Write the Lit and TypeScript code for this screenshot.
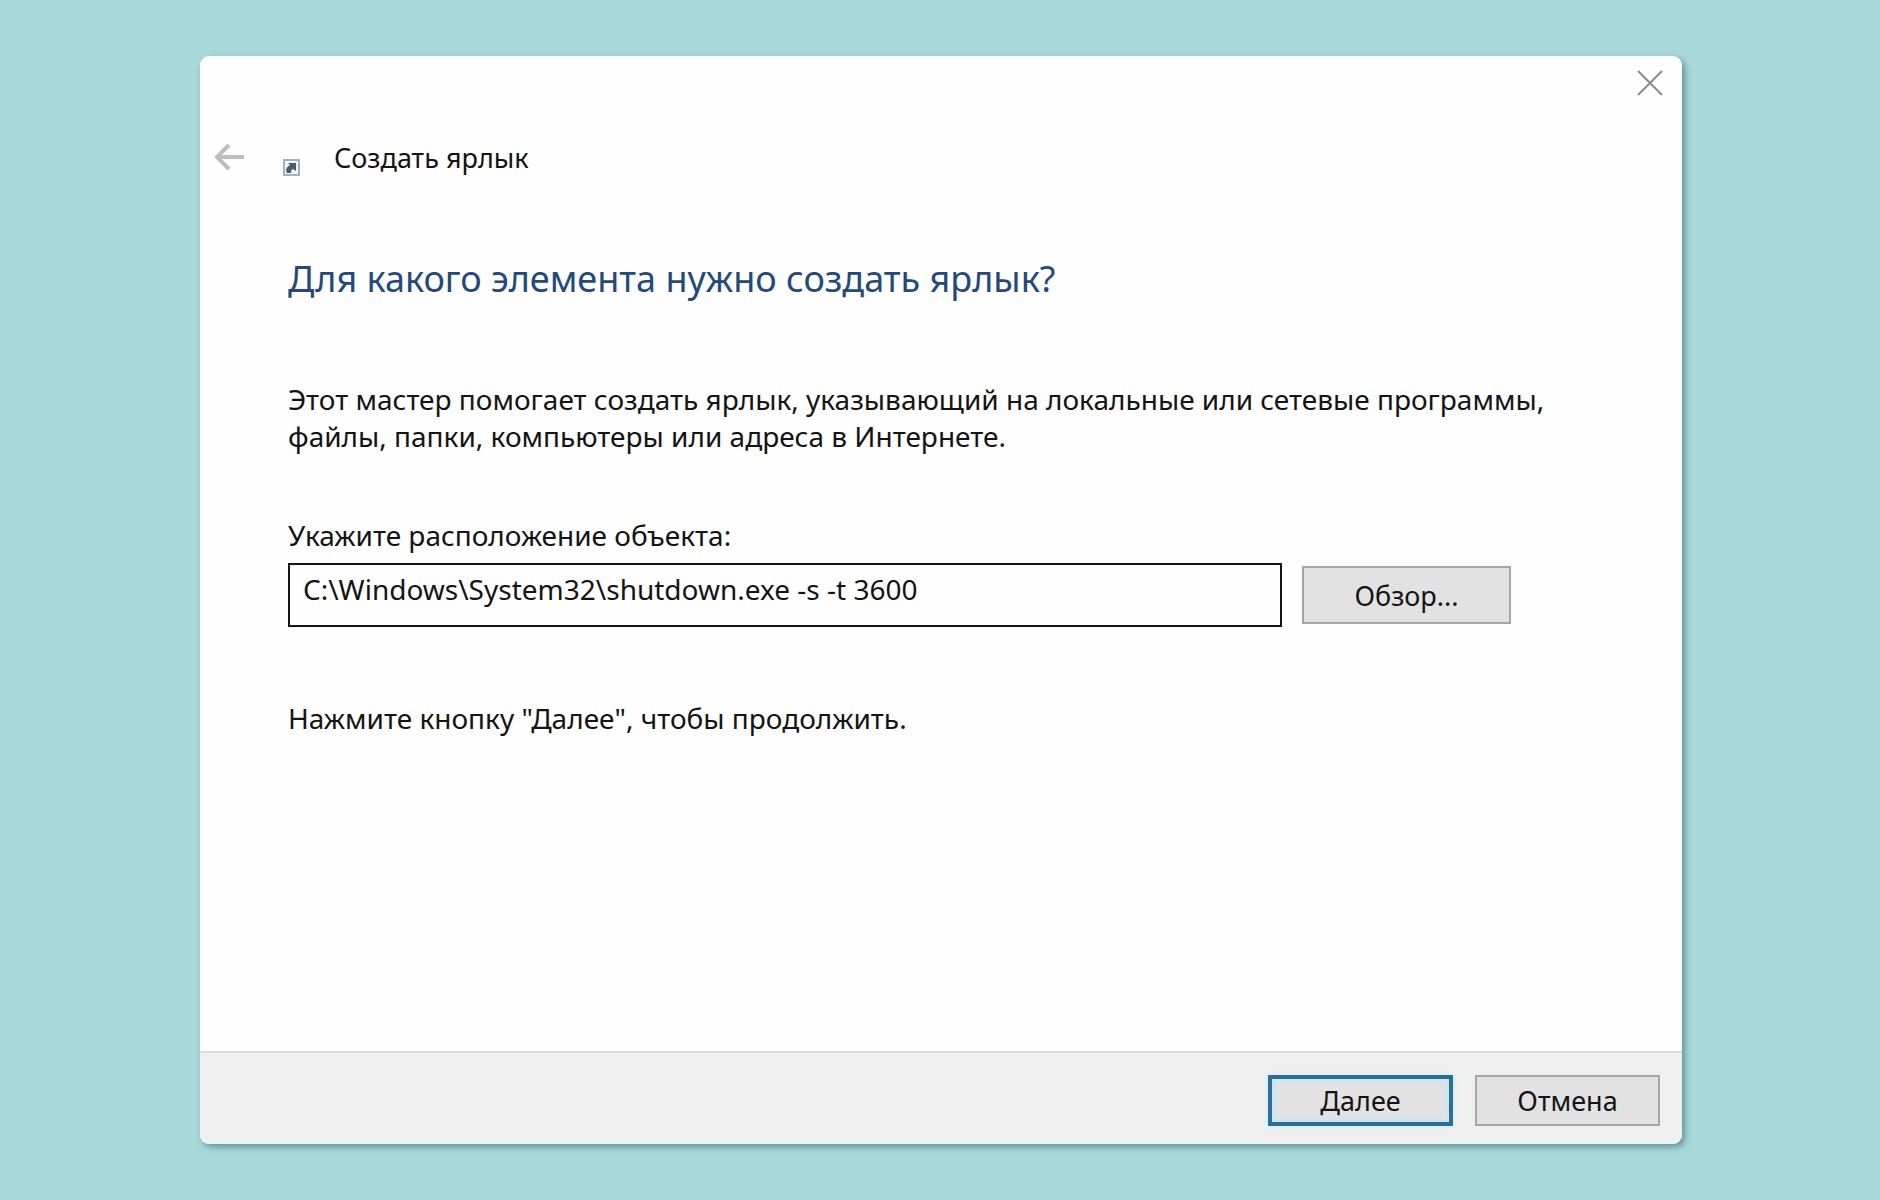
import { LitElement, html, css } from "lit";
import { customElement, state } from "lit/decorators.js";

@customElement("app-root")
export class AppRoot extends LitElement {
  static styles = css`
    :host {
      display: flex;
      box-sizing: border-box;
      min-height: 100vh;
      padding: 56px 198px 56px 200px;
      background: #a7d9db;
      color: #141414;
      font-family: "Noto Sans", "Open Sans", sans-serif;
      font-size: 28px;
      line-height: 37px;
    }
    .window {
      display: flex;
      flex: 1;
      flex-direction: column;
      min-width: 0;
      overflow: hidden;
      border-radius: 9px;
      background: #fefefe;
      box-shadow: 3px 3px 6px rgba(40, 90, 95, 0.55);
    }
    .titlebar {
      display: flex;
      justify-content: flex-end;
      padding: 13px 18px;
    }
    button {
      font: inherit;
      color: inherit;
      margin: 0;
    }
    .icon-button {
      display: flex;
      align-items: center;
      justify-content: center;
      padding: 0;
      border: 0;
      background: none;
    }
    svg {
      display: block;
    }
    .header {
      display: flex;
      align-items: center;
      padding: 29px 14px 0;
    }
    .back {
      margin-right: 38px;
    }
    .shortcut {
      align-self: flex-end;
      margin-right: 34px;
    }
    .title,
    .command {
      font-size: 27px;
    }
    .title {
      margin: 0;
      font-weight: 400;
    }
    .content {
      display: flex;
      flex: 1;
      flex-direction: column;
      padding: 79px 120px 79px 88px;
    }
    .heading {
      margin: 0 0 78px;
      color: #24497a;
      font-size: 36px;
      font-weight: 400;
      line-height: 48px;
    }
    .text {
      margin: 0;
    }
    .location {
      display: flex;
      flex-direction: column;
      gap: 9px;
      margin: 62px 51px 73px 0;
    }
    .field {
      display: flex;
      align-items: center;
      gap: 20px;
    }
    .path {
      box-sizing: border-box;
      flex: 1;
      min-width: 0;
      height: 64px;
      margin: 0;
      padding: 0 13px 12px;
      border: 2px solid #141519;
      border-radius: 0;
      outline: 0;
      background: #fefefe;
      color: inherit;
      font: inherit;
    }
    .command {
      box-sizing: border-box;
      padding: 0;
      border: 2px solid #a6a6a6;
      background: #e2e2e2;
    }
    .browse {
      width: 209px;
      height: 58px;
    }
    .footer {
      display: flex;
      justify-content: flex-end;
      gap: 22px;
      padding: 22px 22px 18px;
      border-top: 2px solid #dcdcdc;
      background: #efefef;
    }
    .footer .command {
      width: 185px;
      height: 51px;
    }
    .footer .primary {
      border: 4px solid #2b6f96;
      box-shadow: inset 0 0 4px 3px #c8e8f6, 0 0 5px 1px #d2f2fa;
    }
  `;

  @state() private path = "C:\\Windows\\System32\\shutdown.exe -s -t 3600";

  private onInput(event: Event) {
    this.path = (event.target as HTMLInputElement).value;
  }

  render() {
    return html`
      <main class="window">
        <div class="titlebar">
          <button class="icon-button" type="button" aria-label="Закрыть">
            <svg width="28" height="28" viewBox="0 0 28 28" fill="none" stroke="#8b8b8b" stroke-width="2">
              <path d="M2 2 26 26M26 2 2 26" />
            </svg>
          </button>
        </div>
        <header class="header">
          <button class="icon-button back" type="button" aria-label="Назад">
            <svg width="31" height="28" viewBox="0 0 31 28" fill="none" stroke="#bdbdbd" stroke-width="4">
              <path d="M30 13H3M15 1 3 13 15 25" />
            </svg>
          </button>
          <svg class="shortcut" width="17" height="17" viewBox="0 0 17 17" aria-hidden="true">
            <rect x="1" y="1" width="15" height="15" fill="#eef5fb" stroke="#a3b1bc" stroke-width="2" />
            <path d="M5 4h8v8l-3-2c-2 1-2 2-2 4H4c-2-4 0-6 3-8z" fill="#4c5b70" />
          </svg>
          <h1 class="title">Создать ярлык</h1>
        </header>
        <section class="content">
          <h2 class="heading">Для какого элемента нужно создать ярлык?</h2>
          <p class="text">
            Этот мастер помогает создать ярлык, указывающий на локальные или сетевые программы,
            файлы, папки, компьютеры или адреса в Интернете.
          </p>
          <div class="location">
            <label for="path">Укажите расположение объекта:</label>
            <div class="field">
              <input class="path" id="path" type="text" spellcheck="false" .value=${this.path} @input=${this.onInput} />
              <button class="command browse" type="button">Обзор...</button>
            </div>
          </div>
          <p class="text">Нажмите кнопку "Далее", чтобы продолжить.</p>
        </section>
        <footer class="footer">
          <button class="command primary" type="button">Далее</button>
          <button class="command" type="button">Отмена</button>
        </footer>
      </main>
    `;
  }
}
